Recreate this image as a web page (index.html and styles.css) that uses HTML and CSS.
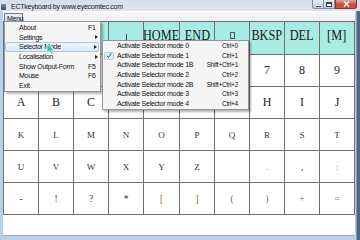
FILE: index.html
```html
<!DOCTYPE html>
<html lang="en">
<head>
    <meta charset="UTF-8">
    <title>ECTkeyboard</title>
    <link rel="stylesheet" href="styles.css">
</head>
<body>
    <div class="window">
        <div class="title-bar">
            <div class="app-icon"></div>
            <div class="caption">ECTkeyboard by www.eyecomtec.com</div>
            <div class="caption-btns">
                <div class="cap-btn min-btn"><span class="min-glyph"></span></div>
                <div class="cap-btn max-btn"><span class="max-glyph"></span></div>
                <div class="cap-btn close-btn">
                    <svg width="7" height="6" viewBox="0 0 7 6"><path d="M1 0.5 L6 5.5 M6 0.5 L1 5.5" stroke="#fff" stroke-width="1.4"/></svg>
                </div>
            </div>
        </div>
        <div class="client">
            <div class="menu-bar"><div class="menu-btn">Menu</div></div>
            <div class="keyboard" id="keyboard"></div>
        </div>
    </div>

    <div class="dropdown">
        <div class="item"><span class="label">About</span><span class="key">F1</span></div>
        <div class="item"><span class="label">Settings</span><span class="key"></span><span class="arrow"></span></div>
        <div class="item hover"><span class="label">Selector Mode</span><span class="key"></span><span class="arrow"></span></div>
        <div class="item"><span class="label">Localisation</span><span class="key"></span><span class="arrow"></span></div>
        <div class="item"><span class="label">Show Output-Form</span><span class="key">F5</span></div>
        <div class="item"><span class="label">Mouse</span><span class="key">F6</span></div>
        <div class="item"><span class="label">Exit</span><span class="key"></span></div>
    </div>

    <div class="submenu">
        <div class="sub-item"><span class="label">Activate Selector mode 0</span><span class="key">Ctrl+0</span></div>
        <div class="sub-item checked">
            <span class="check"><svg width="9" height="7" viewBox="0 0 9 7"><path d="M2 3.8 L3.8 5.8 L7.2 0.8" fill="none" stroke="#2458a8" stroke-width="1.1"/></svg></span>
            <span class="label">Activate Selector mode 1</span><span class="key">Ctrl+1</span>
        </div>
        <div class="sub-item"><span class="label">Activate Selector mode 1B</span><span class="key">Shift+Ctrl+1</span></div>
        <div class="sub-item"><span class="label">Activate Selector mode 2</span><span class="key">Ctrl+2</span></div>
        <div class="sub-item"><span class="label">Activate Selector mode 2B</span><span class="key">Shift+Ctrl+2</span></div>
        <div class="sub-item"><span class="label">Activate Selector mode 3</span><span class="key">Ctrl+3</span></div>
        <div class="sub-item"><span class="label">Activate Selector mode 4</span><span class="key">Ctrl+4</span></div>
    </div>

    <svg class="pointer" width="13" height="12" viewBox="0 0 13 12">
        <path d="M1 1 L1 10 L3.6 7.8 L5.6 11.3 L7.1 10.6 L5.3 7.2 L8.6 7.2 Z" fill="#3bbcb2" stroke="#dffaf7" stroke-width="0.8"/>
    </svg>

    <script>
        // keys hidden behind the open menus are left blank
        const rows = [
            ['', '', '', '#stem', 'HOME', 'END', '#box', 'BKSP', 'DEL', '[M]'],
            ['', '', '', '', '', '', '', '7', '8', '9'],
            ['A', 'B', 'C', '', '', '', '', 'H', 'I', 'J'],
            ['K', 'L', 'M', 'N', 'O', 'P', 'Q', 'R', 'S', 'T'],
            ['U', 'V', 'W', 'X', 'Y', 'Z', '', '.', ',', ':'],
            ['-', '!', '?', '*', '[', ']', '(', ')', '+', '=']
        ];
        const rowClass = ['fn', 'big', 'big', 'small', 'small', 'punct'];
        const tint = { '[': 'brown', ']': 'brown', '(': 'brown', ')': 'brown', '+': 'blue', '=': 'grey' };
        const keyboard = document.getElementById('keyboard');

        rows.forEach((row, r) => {
            row.forEach(text => {
                const cell = document.createElement('div');
                cell.className = 'cell ' + rowClass[r];
                if (text === '#stem' || text === '#box') {
                    const mark = document.createElement('span');
                    mark.className = text.slice(1);
                    cell.appendChild(mark);
                } else if (text) {
                    const span = document.createElement('span');
                    span.className = 'txt' + (tint[text] ? ' ' + tint[text] : '');
                    span.textContent = text;
                    cell.appendChild(span);
                }
                keyboard.appendChild(cell);
            });
        });
    </script>
</body>
</html>
```

FILE: styles.css
```css
* {
    box-sizing: border-box;
}
body {
    margin: 0;
    width: 360px;
    height: 240px;
    overflow: hidden;
    font-family: 'Liberation Sans', Arial, sans-serif;
    font-size: 7px;
    letter-spacing: -0.25px;
    color: #111;
    position: relative;
}
.window {
    width: 360px;
    height: 240px;
    display: flex;
    flex-direction: column;
    background: linear-gradient(to right, #b9d0ea 0, #b9d0ea 356px, #4f6686 357px);
}
.title-bar {
    height: 11px;
    display: flex;
    align-items: center;
    background: linear-gradient(to bottom, #d3dfee, #dbe5f1);
}
.app-icon {
    width: 5px;
    height: 6px;
    margin: 2px 5px 0 1px;
    background: linear-gradient(to bottom, #7d8ea3, #3b4a5c);
    border-radius: 1px;
}
.caption {
    flex: 1;
    padding-top: 1px;
    color: #1a1a1a;
}
.caption-btns {
    display: flex;
    align-self: flex-start;
    margin-right: 3px;
}
.cap-btn {
    height: 9px;
    display: flex;
    align-items: center;
    justify-content: center;
    border: 1px solid #7f8fa4;
    border-top: none;
}
.min-btn {
    width: 11px;
    border-radius: 0 0 0 3px;
    background: linear-gradient(to bottom, #e6ecf3, #c6d1de);
    border-right: none;
}
.max-btn {
    width: 12px;
    background: linear-gradient(to bottom, #e6ecf3, #c6d1de);
}
.close-btn {
    width: 22px;
    border-radius: 0 0 3px 0;
    border-color: #8e3528;
    background: linear-gradient(to bottom, #e9a493, #c9473a 60%, #d0584a);
}
.min-glyph {
    width: 5px;
    height: 2px;
    margin-top: 3px;
    background: #fff;
    border: 1px solid #444;
    border-width: 0 0 1px 0;
}
.max-glyph {
    width: 6px;
    height: 5px;
    border: 1px solid #3d3d3d;
    border-top-width: 2px;
    background: #fff;
}
.client {
    flex: 1;
    margin: 0 5px 4px 3px;
    background: #fff;
    display: flex;
    flex-direction: column;
    border-bottom: 1px solid #8ea8c6;
}
.menu-bar {
    height: 10px;
    background: linear-gradient(to bottom, #f6f8fb, #eceff3);
    border-top: 1px solid #fff;
    padding-left: 1px;
}
.menu-btn {
    width: 19px;
    height: 9px;
    margin-top: 1px;
    padding: 1px 0 0 2px;
    border: 1px solid #6d7f96;
    border-bottom: none;
    background: linear-gradient(to bottom, #e8eef6, #d6e0ec);
}
.keyboard {
    display: grid;
    grid-template-columns: repeat(4, 35px) 36px repeat(5, 35px);
    grid-template-rows: 33px repeat(5, 32px);
    border-top: 1px solid #6f6f6f;
    border-left: 1px solid #6f6f6f;
    font-family: 'Liberation Serif', 'Times New Roman', serif;
    letter-spacing: 0;
}
.cell {
    display: flex;
    align-items: center;
    justify-content: center;
    overflow: hidden;
    border-right: 1px solid #6f6f6f;
    border-bottom: 1px solid #6f6f6f;
    color: #242424;
}
.cell.fn {
    background: #a9ece4;
    font-size: 15px;
    line-height: 13px;
    padding-bottom: 5px;
    color: #161616;
}
.cell.fn .txt {
    display: inline-block;
    white-space: nowrap;
    transform: scaleX(0.82);
}
.cell.big {
    font-size: 12px;
}
.cell.small {
    font-size: 9px;
    color: #333;
}
.cell.punct {
    font-size: 9.5px;
    color: #333;
}
.brown {
    color: #a0622d;
}
.blue {
    color: #4878c8;
}
.grey {
    color: #8a8a8a;
}
.stem {
    width: 1px;
    height: 12px;
    margin-top: 8px;
    background: #444;
}
.box {
    width: 5px;
    height: 7px;
    border: 1px solid #555;
}
.dropdown {
    position: absolute;
    left: 4px;
    top: 21px;
    width: 97px;
    padding-top: 1px;
    padding-bottom: 1px;
    background: #f5f5f5;
    border: 1px solid #979797;
    box-shadow: 2px 2px 2px rgba(0, 0, 0, 0.3);
}
.item {
    height: 9.6px;
    display: flex;
    align-items: center;
    padding: 0 2px 0 14px;
    white-space: nowrap;
}
.item.hover {
    margin: 0 1px 0 0;
    padding: 0 1px 0 13px;
    background: linear-gradient(to bottom, #f1f6fc, #dce8f6);
    border: 1px solid #aac7ea;
    border-radius: 2px;
}
.item .label {
    flex: 1;
}
.item .key {
    width: 10px;
}
.arrow {
    width: 0;
    height: 0;
    border-left: 3px solid #222;
    border-top: 2.5px solid transparent;
    border-bottom: 2.5px solid transparent;
}
.submenu {
    position: absolute;
    left: 102px;
    top: 40px;
    width: 147px;
    padding-bottom: 1px;
    background: #f5f5f5;
    border: 1px solid #979797;
    box-shadow: 2px 2px 2px rgba(0, 0, 0, 0.3);
}
.sub-item {
    height: 9.6px;
    display: flex;
    align-items: center;
    padding: 0 10px 0 14px;
    white-space: nowrap;
    position: relative;
}
.sub-item .label {
    flex: 1;
}
.sub-item .key {
    font-size: 6.5px;
}
.check {
    position: absolute;
    left: 1px;
    top: 1px;
    width: 10px;
    height: 8px;
    display: flex;
    align-items: center;
    justify-content: center;
    background: #e3edf9;
    border: 1px solid #a9c9ee;
    border-radius: 2px;
}
.pointer {
    position: absolute;
    left: 46px;
    top: 43px;
}
```
